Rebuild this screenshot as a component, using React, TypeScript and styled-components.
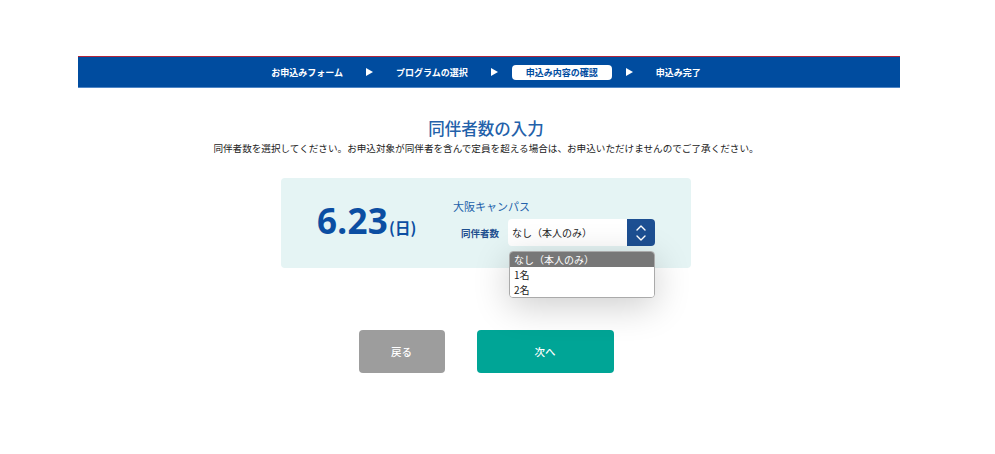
import React from "react";
import styled, { createGlobalStyle } from "styled-components";

const Global = createGlobalStyle`
  html, body { margin: 0; padding: 0; background: #fff; }
  body { font-family: "Noto Sans CJK JP", "Noto Sans", sans-serif; }
`;

const Page = styled.div`
  width: 995px;
  height: 454px;
  padding-top: 56px;
  box-sizing: border-box;
  overflow: hidden;
`;

const Container = styled.div`
  margin-left: 78px;
  width: 822px;
  display: flex;
  flex-direction: column;
  align-items: center;
`;

const StepBar = styled.nav`
  width: 100%;
  height: 32px;
  box-sizing: border-box;
  background: #004c9f;
  border-top: 1px solid #b0243c;
  border-bottom: 1px solid #4f86c6;
  display: flex;
  align-items: center;
  justify-content: center;
  padding-right: 6px;
  gap: 23px;
`;

const Step = styled.span<{ $active?: boolean }>`
  font-size: 9px;
  font-weight: 700;
  line-height: 15px;
  height: 15px;
  color: ${(p) => (p.$active ? "#004c9f" : "#fff")};
  background: ${(p) => (p.$active ? "#fff" : "transparent")};
  border-radius: 4px;
  padding: ${(p) => (p.$active ? "0 14px" : "0")};
  margin: ${(p) => (p.$active ? "0 -9px" : "0")};
  white-space: nowrap;
`;

const Arrow = styled.span`
  width: 0;
  height: 0;
  border-top: 4px solid transparent;
  border-bottom: 4px solid transparent;
  border-left: 7px solid #fff;
`;

const Title = styled.h1`
  margin: 29px 0 0 -6px;
  font-size: 16.5px;
  font-weight: 500;
  color: #2361aa;
  line-height: 22px;
`;

const Lead = styled.p`
  margin: 2px 0 0 -6px;
  font-size: 9.6px;
  color: #222;
  line-height: 14px;
`;

const Panel = styled.section`
  margin: 23px 0 0 -6px;
  width: 410px;
  height: 90px;
  box-sizing: border-box;
  background: #e5f4f4;
  border-radius: 4px;
  display: flex;
  align-items: flex-start;
  padding: 18px 0 0 36px;
  position: relative;
  z-index: 1;
`;

const DateBlock = styled.div`
  display: flex;
  align-items: baseline;
  color: #0b4ea2;
  font-family: "Noto Sans", sans-serif;
  font-weight: 700;
  margin-top: 5px;
  width: 136px;
`;

const DateNum = styled.span`
  font-size: 35px;
  line-height: 40px;
  letter-spacing: 0.3px;
`;

const DateDay = styled.span`
  font-family: "Noto Sans CJK JP", sans-serif;
  font-size: 15.5px;
  margin-left: 1px;
`;

const Info = styled.div`
  display: flex;
  flex-direction: column;
  align-items: flex-start;
`;

const Campus = styled.div`
  font-size: 11px;
  color: #2361aa;
  line-height: 16px;
  margin-top: 2px;
`;

const Row = styled.div`
  display: flex;
  align-items: center;
  margin-top: 5px;
  margin-left: 8px;
  gap: 9px;
`;

const Label = styled.span`
  font-size: 9.5px;
  font-weight: 700;
  color: #1f4f8f;
`;

const SelectWrap = styled.div`
  position: relative;
`;

const SelectBox = styled.div`
  width: 147px;
  height: 27px;
  display: flex;
  border-radius: 4px;
  overflow: hidden;
  background: #fff;
`;

const SelectValue = styled.div`
  flex: 1;
  font-size: 10px;
  color: #222;
  display: flex;
  align-items: center;
  padding-left: 4px;
`;

const SelectBtn = styled.div`
  width: 28px;
  background: #1d4f92;
  display: flex;
  align-items: center;
  justify-content: center;
`;

const Menu = styled.ul`
  position: absolute;
  left: 1px;
  top: 32px;
  width: 146px;
  margin: 0;
  padding: 0;
  list-style: none;
  background: #fff;
  border: 1px solid #aaa;
  border-radius: 4px;
  overflow: hidden;
  box-shadow: 0 8px 36px rgba(0, 0, 0, 0.2);
  box-sizing: border-box;
`;

const Option = styled.li<{ $selected?: boolean }>`
  font-size: 10px;
  line-height: 15px;
  padding-left: 4px;
  color: ${(p) => (p.$selected ? "#fff" : "#222")};
  background: ${(p) => (p.$selected ? "#777" : "#fff")};
`;

const Buttons = styled.div`
  display: flex;
  gap: 32px;
  margin: 62px 0 0 -6px;
`;

const Button = styled.button<{ $primary?: boolean }>`
  border: none;
  border-radius: 4px;
  height: 43px;
  width: ${(p) => (p.$primary ? "137px" : "86px")};
  background: ${(p) => (p.$primary ? "#00a596" : "#9d9d9d")};
  color: #fff;
  font-family: "Noto Sans CJK JP", sans-serif;
  font-size: 10.5px;
  font-weight: 500;
  padding: 0;
`;

export default function App() {
  return (
    <Page>
      <Global />
      <Container>
        <StepBar>
          <Step>お申込みフォーム</Step>
          <Arrow />
          <Step>プログラムの選択</Step>
          <Arrow />
          <Step $active>申込み内容の確認</Step>
          <Arrow />
          <Step>申込み完了</Step>
        </StepBar>
        <Title>同伴者数の入力</Title>
        <Lead>
          同伴者数を選択してください。お申込対象が同伴者を含んで定員を超える場合は、お申込いただけませんのでご了承ください。
        </Lead>
        <Panel>
          <DateBlock>
            <DateNum>6.23</DateNum>
            <DateDay>(日)</DateDay>
          </DateBlock>
          <Info>
            <Campus>大阪キャンパス</Campus>
            <Row>
              <Label>同伴者数</Label>
              <SelectWrap>
                <SelectBox>
                  <SelectValue>なし（本人のみ）</SelectValue>
                  <SelectBtn>
                    <svg width="12" height="20" viewBox="0 0 12 20" fill="none" stroke="#fff" strokeWidth="1.4" strokeLinecap="round" strokeLinejoin="round">
                      <path d="M2 7 L6 3 L10 7" />
                      <path d="M2 13 L6 17 L10 13" />
                    </svg>
                  </SelectBtn>
                </SelectBox>
                <Menu>
                  <Option $selected>なし（本人のみ）</Option>
                  <Option>1名</Option>
                  <Option>2名</Option>
                </Menu>
              </SelectWrap>
            </Row>
          </Info>
        </Panel>
        <Buttons>
          <Button>戻る</Button>
          <Button $primary>次へ</Button>
        </Buttons>
      </Container>
    </Page>
  );
}
